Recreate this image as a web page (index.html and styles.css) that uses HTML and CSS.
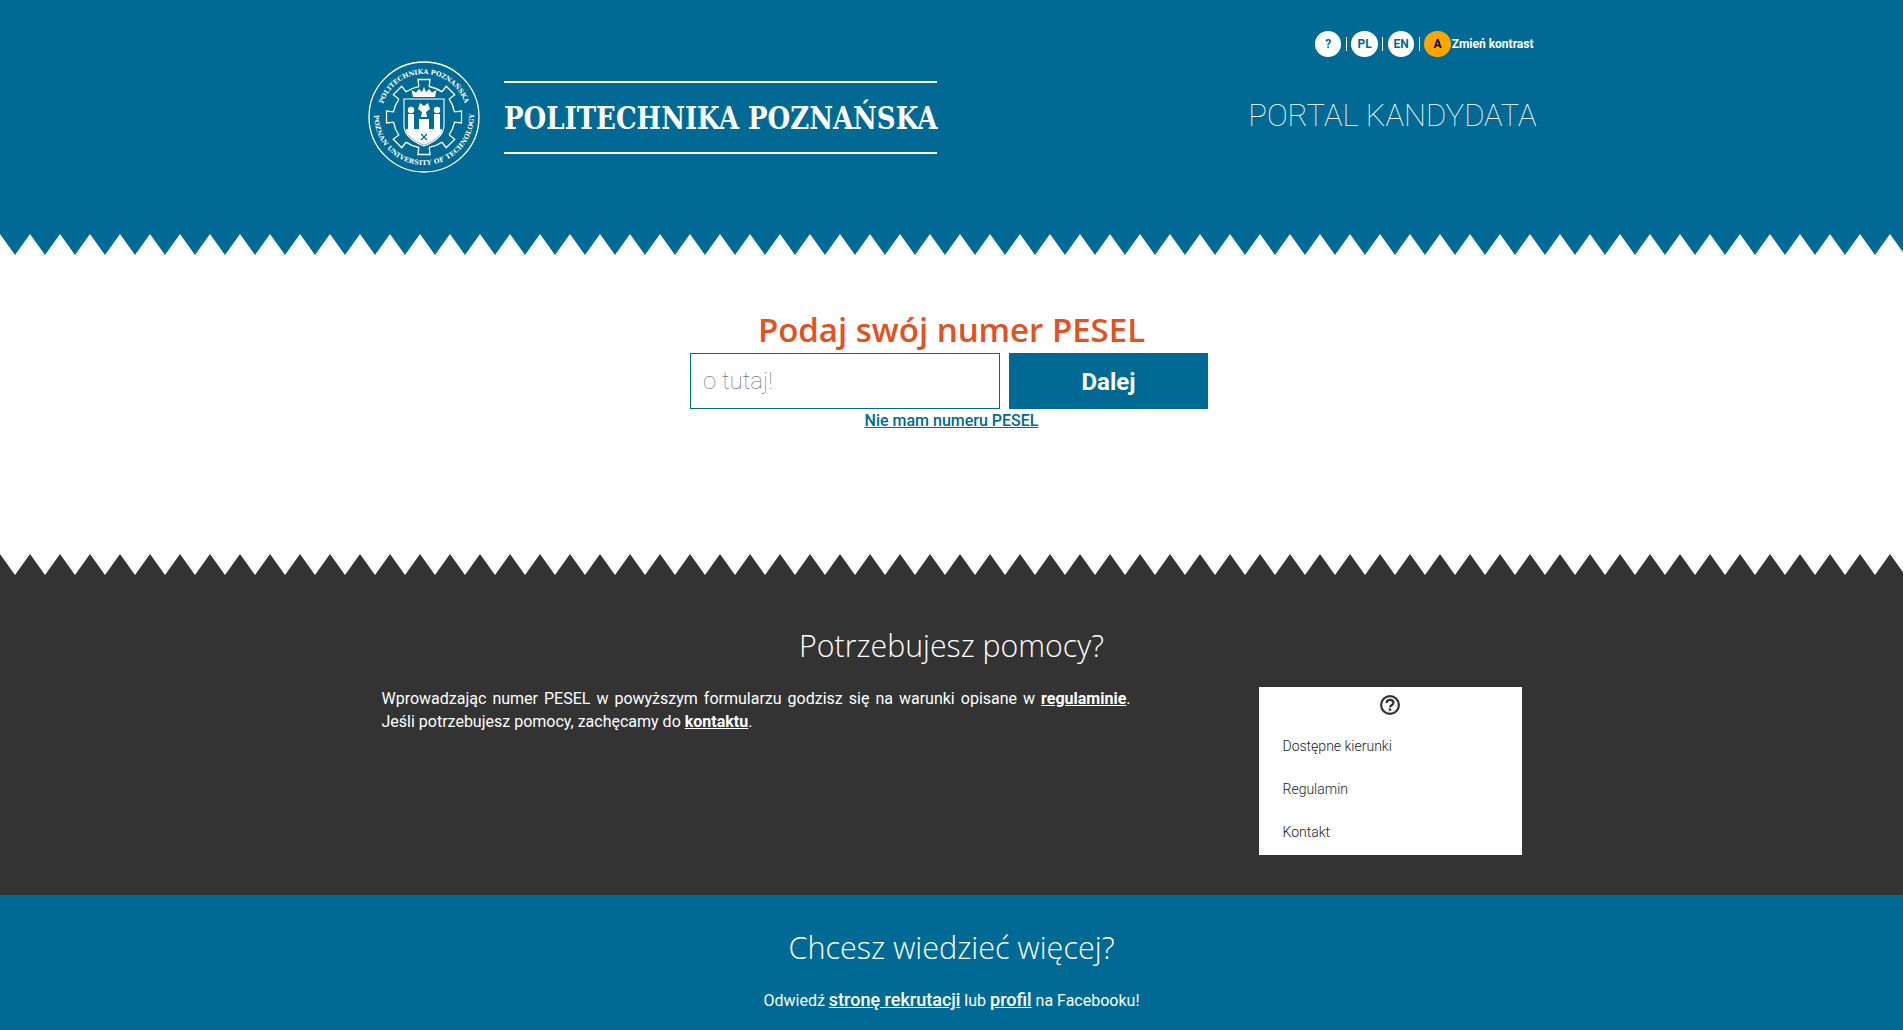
FILE: index.html
```html
<!DOCTYPE html>
<html lang="pl">
<head>
<meta charset="utf-8">
<title>Portal Kandydata</title>
<link rel="stylesheet" href="styles.css">
</head>
<body>
<svg class="defs" width="0" height="0" aria-hidden="true">
  <defs>
    <pattern id="teeth" width="30" height="21" patternUnits="userSpaceOnUse">
      <path class="tooth" d="M0 0H30L15 21Z"/>
    </pattern>
    <pattern id="teeth2" width="30" height="21" patternUnits="userSpaceOnUse">
      <path class="tooth-white" d="M0 0H30L15 21Z"/>
    </pattern>
    <path id="gear-seg" d="M-5.2-30.500L-6-37.500H6L5.200-30.500A30.900 30.900 0 0 1 17.900-25.100" fill="none" stroke="#fff" stroke-width="1.300"/>
  </defs>
</svg>
<header class="top">
  <div class="container top-row">
    <a class="brand" href="#">
      <svg class="emblem" viewBox="0 0 112 112" width="112" height="112">
        <circle cx="56" cy="56" r="55" fill="none" stroke="#fff" stroke-width="1.300"/>
        <defs>
          <path id="ring-top" d="M15 43A43 43 0 0 1 97 43"/>
          <path id="ring-bottom" d="M6 54A50 50 0 1 0 106 54"/>
        </defs>
        <text class="ring"><textPath href="#ring-top" textLength="108" lengthAdjust="spacing">POLITECHNIKA POZNAŃSKA</textPath></text>
        <text class="ring"><textPath href="#ring-bottom" textLength="158" lengthAdjust="spacing">POZNAN UNIVERSITY OF TECHNOLOGY</textPath></text>
        <g transform="translate(56 56)">
          <use href="#gear-seg"/>
          <use href="#gear-seg" transform="rotate(45)"/>
          <use href="#gear-seg" transform="rotate(90)"/>
          <use href="#gear-seg" transform="rotate(135)"/>
          <use href="#gear-seg" transform="rotate(180)"/>
          <use href="#gear-seg" transform="rotate(225)"/>
          <use href="#gear-seg" transform="rotate(270)"/>
          <use href="#gear-seg" transform="rotate(315)"/>
          <path d="M-11-20L-12.500-27-8-24.500-5-28-2-25 0-30 2-25 5-28 8-24.500 12.500-27 11-20Z" fill="#fff"/>
          <path d="M-20-18H20V8C20 20 8 26 0 29C-8 26-20 20-20 8Z" fill="#006a94" stroke="#fff" stroke-width="1.100"/>
          <path d="M-4-14L0-11 4-14 6-8 2-5 3 0H-3L-2-5-6-8Z" fill="#fff"/>
          <circle cx="-13" cy="-7" r="3.200" fill="#fff"/>
          <circle cx="13" cy="-7" r="3.200" fill="#fff"/>
          <path d="M-16-3H-10V12H-16ZM10-3H16V12H10ZM-5 2H5V12H-5Z" fill="#fff"/>
          <path d="M-18 12H18V14C16 20 8 25 0 28C-8 25-16 20-18 14Z" fill="#fff"/>
          <path d="M-3 17L3 23M3 17L-3 23" stroke="#006a94" stroke-width="1.300"/>
        </g>
      </svg>
      <span class="brand-name"><span class="brand-inner">POLITECHNIKA POZNAŃSKA</span></span>
    </a>
    <div class="top-side">
      <nav class="tools">
        <a class="tool" href="#">?</a><span class="sep"></span>
        <a class="tool" href="#">PL</a><span class="sep"></span>
        <a class="tool" href="#">EN</a><span class="sep"></span>
        <a class="tool tool-contrast" href="#">A</a>
        <a class="contrast-label" href="#">Zmień kontrast</a>
      </nav>
      <div class="portal">PORTAL KANDYDATA</div>
    </div>
  </div>
</header>
<svg class="zigzag zig-blue" width="100%" height="21" aria-hidden="true"><rect width="100%" height="21" fill="url(#teeth)"/></svg>
<main class="main">
  <h1 class="pesel-title">Podaj swój numer PESEL</h1>
  <form class="pesel-form">
    <input class="pesel-input" type="text" placeholder="o tutaj!">
    <button class="pesel-btn" type="button">Dalej</button>
  </form>
  <a class="no-pesel" href="#">Nie mam numeru PESEL</a>
</main>
<svg class="zigzag zig-dark" width="100%" height="21" aria-hidden="true"><rect width="100%" height="21" fill="url(#teeth2)"/></svg>
<section class="help">
  <h2 class="section-title">Potrzebujesz pomocy?</h2>
  <div class="container help-row">
    <p class="help-text">Wprowadzając numer PESEL w powyższym formularzu godzisz się na warunki opisane w <a href="#">regulaminie</a>. Jeśli potrzebujesz pomocy, zachęcamy do <a href="#">kontaktu</a>.</p>
    <aside class="help-box">
      <svg class="help-icon" viewBox="0 0 20 20" width="20" height="20">
        <circle cx="10" cy="10" r="8.900" fill="none" stroke="#333" stroke-width="2.200"/>
        <path d="M6.600 7.900C6.700 5.800 8.100 4.800 10 4.800c2 0 3.400 1.200 3.400 2.900 0 2.500-3.400 2.400-3.400 4.600" fill="none" stroke="#333" stroke-width="2.300"/>
        <rect x="8.800" y="13.400" width="2.400" height="2.400" fill="#333"/>
      </svg>
      <ul class="help-links">
        <li><a href="#">Dostępne kierunki</a></li>
        <li><a href="#">Regulamin</a></li>
        <li><a href="#">Kontakt</a></li>
      </ul>
    </aside>
  </div>
</section>
<footer class="more">
  <h2 class="section-title more-title">Chcesz wiedzieć więcej?</h2>
  <p class="more-text">Odwiedź <a href="#">stronę rekrutacji</a> lub <a href="#">profil</a> na Facebooku!</p>
</footer>
</body>
</html>
```
FILE: styles.css
```css
* { box-sizing: border-box; }
html, body { margin: 0; padding: 0; }
body { font-family: Roboto, "Liberation Sans", sans-serif; font-size: 16px; color: #333; background: #fff; overflow: hidden; }
a { color: inherit; }
.defs { position: absolute; }
.tooth { fill: #006a94; }
.tooth-white { fill: #fff; }
.container { width: 1170px; margin: 0 auto; }
.zigzag { display: block; }
.zig-blue { background: #fff; }
.zig-dark { background: #333; }

.top { background: #006a94; height: 234px; color: #fff; }
.top-row { display: flex; justify-content: space-between; align-items: flex-start; padding-top: 31px; }
.brand { display: flex; align-items: center; text-decoration: none; color: #fff; padding-left: 1px; margin-top: 30px; }
.emblem { display: block; flex: none; }
.ring { font: 700 6.600px "DejaVu Serif", serif; fill: #fff; }
.brand-name { display: block; margin-left: 24px; width: 433px; height: 73px; border-top: 2px solid #fff; border-bottom: 2px solid #fff; font: 700 32px/71px "DejaVu Serif", serif; white-space: nowrap; }
.brand-inner { display: inline-block; transform: scaleX(.813); transform-origin: left center; }
.top-side { display: flex; flex-direction: column; align-items: flex-end; }
.tools { display: flex; align-items: center; height: 26px; padding-right: 3px; }
.tool { width: 26.400px; height: 26px; border-radius: 50%; background: #fff; color: #006a94; font-size: 12px; font-weight: 700; line-height: 26px; text-align: center; text-decoration: none; }
.tool-contrast { background: #ffa500; color: #000; }
.sep { width: 1px; height: 14px; background: #fff; margin: 0 4.500px; }
.contrast-label { font-size: 12px; font-weight: 700; text-decoration: none; margin-left: 1px; }
.portal { font-size: 31px; font-weight: 100; line-height: 38px; margin-top: 40px; white-space: nowrap; }

.main { height: 299px; display: flex; flex-direction: column; align-items: center; padding-top: 57px; }
.pesel-title { margin: 0 0 6px; font: 600 33px/35px "Open Sans", sans-serif; color: #e2511f; }
.pesel-form { display: flex; gap: 9px; margin-right: 5px; }
.pesel-input { width: 310px; height: 56px; border: 1px solid #006a94; padding: 0 12px; font: 100 24px Roboto, sans-serif; outline: none; background: #fff; }
.pesel-input::placeholder { color: #777; opacity: 1; }
.pesel-btn { width: 199px; height: 56px; border: 0; background: #006a94; color: #fff; font: 700 24px Roboto, sans-serif; padding: 1px 0 0; }
.no-pesel { font-size: 16px; font-weight: 500; color: #006a94; line-height: 22px; margin-top: 1px; }

.section-title { margin: 0; text-align: center; font: 300 30.300px/36px "Open Sans", sans-serif; color: #fff; }
.more-title { font-size: 30.600px; }
.help { background: #333; height: 320px; color: #fff; padding-top: 53px; }
.help-row { display: flex; margin-top: 23px; }
.help-text { margin: 0; width: 780px; padding: 0 16px 0 15px; line-height: 23px; text-align: justify; }
.help-text a { font-weight: 700; }
.help-box { width: 263px; height: 168px; margin-left: 112px; background: #fff; color: #222; padding-top: 8px; }
.help-icon { display: block; margin: 0 auto; }
.help-links { list-style: none; margin: 23px 0 0; padding: 0 0 0 24px; font-size: 14px; font-weight: 300; }
.help-links li { height: 43px; line-height: 17px; }
.help-links a { text-decoration: none; }

.more { background: #006a94; height: 135px; color: #fff; padding-top: 34px; }
.more-text { margin: 23px 0 0; text-align: center; line-height: 24px; }
.more-text a { font-size: 18px; font-weight: 500; }
```
